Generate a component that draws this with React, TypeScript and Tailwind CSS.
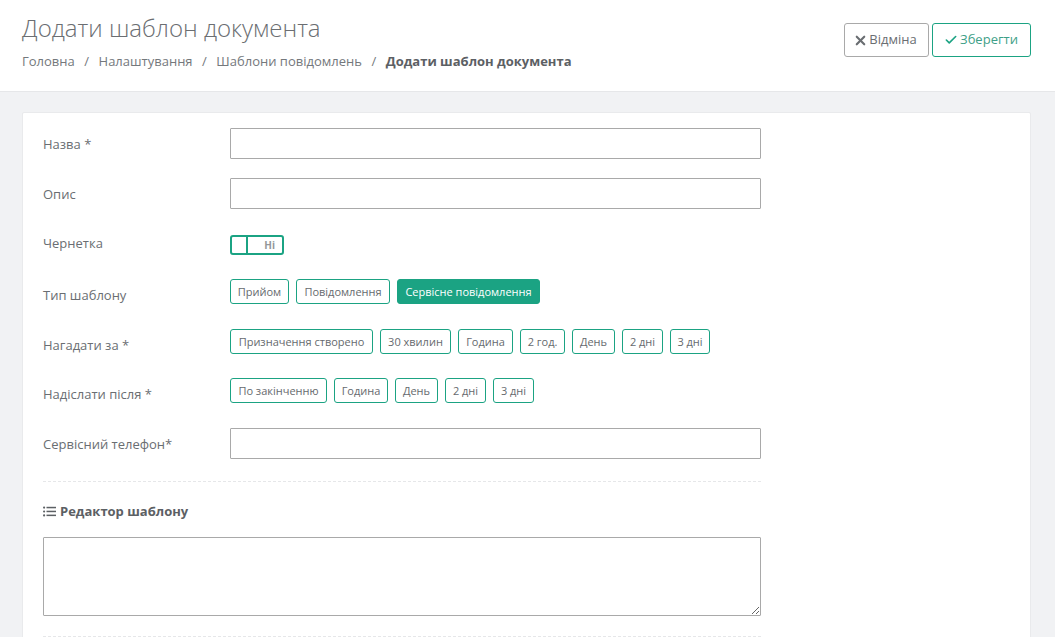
import React from "react";
import { X, Check } from "lucide-react";

const font = "font-['Open_Sans',sans-serif]";

function Chip({ children, active, className }: { children: React.ReactNode; active?: boolean; className: string }) {
  return (
    <span
      className={
        "flex h-[25px] items-center justify-center rounded-[3px] border border-[#1ba383] text-[11px] leading-none " +
        (active ? "bg-[#1ba383] font-medium text-white " : "bg-white text-[#666a6e] ") +
        className
      }
    >
      {children}
    </span>
  );
}

function Row({ label, top, className, children }: { label: string; top: string; className: string; children: React.ReactNode }) {
  return (
    <div className={"flex items-start " + className}>
      <div className={"w-[187px] shrink-0 text-[13px] leading-[18px] text-[#6a6e72] " + top}>{label}</div>
      <div className="min-w-0 flex-1">{children}</div>
    </div>
  );
}

function TextInput() {
  return <input className="block h-[31px] w-full rounded-[1px] border border-[#a9a9a9] bg-white outline-none" />;
}

export default function App() {
  return (
    <div className={"h-[637px] w-[1055px] overflow-hidden bg-[#f1f2f4] " + font}>
      <header className="flex h-[92px] items-start justify-between border-b border-[#e6e7e9] bg-white pl-[22px] pr-[24px]">
        <div>
          <h1 className="mt-[11px] text-[24px] font-light leading-[33px] text-[#6b6e72]">Додати шаблон документа</h1>
          <nav className="mt-[8px] flex items-center text-[13px] leading-[18px] text-[#74787c]">
            <span>Головна</span>
            <span className="mx-[9.5px]">/</span>
            <span>Налаштування</span>
            <span className="mx-[9.5px]">/</span>
            <span>Шаблони повідомлень</span>
            <span className="mx-[9.5px]">/</span>
            <span className="font-bold text-[#5c6064]">Додати шаблон документа</span>
          </nav>
        </div>
        <div className="mt-[23px] flex gap-[3px]">
          <button className="flex h-[34px] w-[85px] items-center justify-center gap-[1px] rounded-[3px] border border-[#a9a9a9] bg-white pr-[3px] text-[13px] text-[#6a6e72]">
            <X size={15} strokeWidth={3.4} className="text-[#6a6e72]" />
            Відміна
          </button>
          <button className="flex h-[34px] w-[99px] items-center justify-center gap-[2px] rounded-[3px] border border-[#1ba383] bg-white pr-[1px] text-[13px] text-[#3f9f88]">
            <Check size={14} strokeWidth={2.8} className="text-[#1ba383]" />
            Зберегти
          </button>
        </div>
      </header>

      <main className="ml-[22px] mr-[24px] mt-[20px] h-[600px] rounded-[2px] border border-[#e9eaec] bg-white pl-[20px] pt-[15px]">
        <div className="w-[718px]">
          <Row label="Назва *" top="mt-[7px]" className="mb-[19px]">
            <TextInput />
          </Row>
          <Row label="Опис" top="mt-[7px]" className="mb-[26px]">
            <TextInput />
          </Row>
          <Row label="Чернетка" top="-mt-px" className="mb-[24px]">
            <div className="flex h-[20px] w-[54px] overflow-hidden rounded-[3px] border-2 border-[#1ba383] bg-white">
              <span className="w-[16px] border-r-2 border-[#1ba383]" />
              <span className="flex flex-1 items-center justify-end pr-[7px] text-[10px] font-bold leading-none text-[#94979a]">Ні</span>
            </div>
          </Row>
          <Row label="Тип шаблону" top="mt-[7px]" className="mb-[25px]">
            <div className="flex gap-[7px]">
              <Chip className="w-[59px]">Прийом</Chip>
              <Chip className="w-[94px]">Повідомлення</Chip>
              <Chip active className="w-[143px]">Сервісне повідомлення</Chip>
            </div>
          </Row>
          <Row label="Нагадати за *" top="mt-[7px]" className="mb-[24px]">
            <div className="flex gap-[7px]">
              <Chip className="w-[143px]">Призначення створено</Chip>
              <Chip className="w-[71px]">30 хвилин</Chip>
              <Chip className="w-[55px]">Година</Chip>
              <Chip className="w-[45px]">2 год.</Chip>
              <Chip className="w-[43px]">День</Chip>
              <Chip className="w-[41px]">2 дні</Chip>
              <Chip className="w-[40px]">3 дні</Chip>
            </div>
          </Row>
          <Row label="Надіслати після *" top="mt-[7px]" className="mb-[25px]">
            <div className="flex gap-[7px]">
              <Chip className="w-[97px]">По закінченню</Chip>
              <Chip className="w-[54px]">Година</Chip>
              <Chip className="w-[43px]">День</Chip>
              <Chip className="w-[41px]">2 дні</Chip>
              <Chip className="w-[41px]">3 дні</Chip>
            </div>
          </Row>
          <Row label="Сервісний телефон*" top="mt-[7px]" className="">
            <TextInput />
          </Row>
          <div className="mt-[22px] border-t border-dashed border-[#e6e7e9]" />
          <h3 className="mt-[20px] flex items-center gap-[4px] text-[13px] font-bold leading-[18px] text-[#5c6064]">
            <svg width="13" height="11" viewBox="0 0 13 11" fill="currentColor">
              <circle cx="1.1" cy="1.6" r="1.1" />
              <circle cx="1.1" cy="5.5" r="1.1" />
              <circle cx="1.1" cy="9.4" r="1.1" />
              <rect x="3.5" y="0.8" width="9.5" height="1.5" />
              <rect x="3.5" y="4.7" width="9.5" height="1.5" />
              <rect x="3.5" y="8.6" width="9.5" height="1.5" />
            </svg>
            Редактор шаблону
          </h3>
          <textarea className="mt-[17px] block h-[79px] w-full rounded-[1px] border border-[#a9a9a9] bg-white outline-none" />
          <div className="mt-[20px] border-t border-dashed border-[#e6e7e9]" />
        </div>
      </main>
    </div>
  );
}
